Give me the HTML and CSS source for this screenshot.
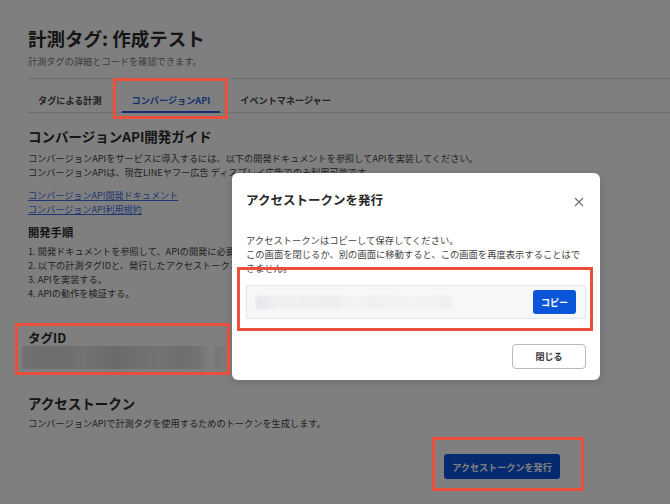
FILE: index.html
```html
<!DOCTYPE html>
<html lang="ja">
<head>
<meta charset="utf-8">
<title>計測タグ: 作成テスト</title>
<link rel="stylesheet" href="styles.css">
</head>
<body>
<div class="page">
  <h1 class="title">計測タグ: 作成テスト</h1>
  <p class="subtitle">計測タグの詳細とコードを確認できます。</p>
  <nav class="tabs">
    <span class="tab">タグによる計測</span>
    <span class="tab tab-active">コンバージョンAPI</span>
    <span class="tab">イベントマネージャー</span>
  </nav>
  <section class="guide">
    <h2 class="section-title">コンバージョンAPI開発ガイド</h2>
    <p class="text">コンバージョンAPIをサービスに導入するには、以下の開発ドキュメントを参照してAPIを実装してください。<br>コンバージョンAPIは、現在LINEヤフー広告 ディスプレイ広告でのみ利用可能です。</p>
    <div class="links">
      <a class="link" href="#">コンバージョンAPI開発ドキュメント</a>
      <a class="link" href="#">コンバージョンAPI利用規約</a>
    </div>
    <h3 class="sub-title">開発手順</h3>
    <ol class="steps">
      <li>1. 開発ドキュメントを参照して、APIの開発に必要な情報を確認する。</li>
      <li>2. 以下の計測タグIDと、発行したアクセストークンを使用する。</li>
      <li>3. APIを実装する。</li>
      <li>4. APIの動作を検証する。</li>
    </ol>
  </section>
  <section class="tagid">
    <h3 class="tagid-title">タグID</h3>
    <div class="blur-bar"></div>
  </section>
  <section class="token">
    <h2 class="section-title">アクセストークン</h2>
    <p class="text">コンバージョンAPIで計測タグを使用するためのトークンを生成します。</p>
    <div class="btn-row">
      <button class="btn-primary">アクセストークンを発行</button>
    </div>
  </section>
</div>

<div class="overlay"></div>

<div class="modal">
  <div class="modal-header">
    <h2 class="modal-title">アクセストークンを発行</h2>
    <span class="modal-close">
      <svg width="10" height="10" viewBox="0 0 10 10"><path d="M1 1L9 9M9 1L1 9" stroke="#6b6b6b" stroke-width="1.1" fill="none"/></svg>
    </span>
  </div>
  <p class="modal-text">アクセストークンはコピーして保存してください。<br>この画面を閉じるか、別の画面に移動すると、この画面を再度表示することはできません。</p>
  <div class="token-box">
    <div class="token-blur"></div>
    <button class="btn-copy">コピー</button>
  </div>
  <div class="modal-footer">
    <button class="btn-close">閉じる</button>
  </div>
</div>

<div class="mark mark-tab"></div>
<div class="mark mark-tagid"></div>
<div class="mark mark-modal"></div>
<div class="mark mark-btn"></div>
</body>
</html>
```

FILE: styles.css
```css
* { box-sizing: border-box; }
html, body {
  margin: 0;
  padding: 0;
  width: 670px;
  height: 504px;
  overflow: hidden;
  background: #ffffff;
  font-family: "Noto Sans CJK JP", "Noto Sans", sans-serif;
  color: #333333;
}
.page {
  padding: 26px 0 0 28px;
}
.title {
  margin: 0;
  font-size: 18.5px;
  line-height: 24px;
  font-weight: 700;
  color: #2a2a2a;
}
.subtitle {
  margin: 4px 0 0;
  font-size: 9.2px;
  line-height: 14px;
  color: #777777;
}
.tabs {
  margin-top: 10px;
  display: flex;
  gap: 10px;
  border-top: 1px solid #dcdcdc;
  border-bottom: 1px solid #dcdcdc;
}
.tab {
  padding: 14px 10px 4px;
  font-size: 9.15px;
  line-height: 14px;
  font-weight: 700;
  color: #444444;
  border-bottom: 2px solid transparent;
  margin-bottom: -1px;
}
.tab-active {
  color: #2b5fd9;
  border-bottom-color: #2b5fd9;
}
.guide { margin-top: 14px; }
.section-title {
  margin: 0;
  font-size: 13.5px;
  line-height: 18px;
  font-weight: 700;
  color: #2a2a2a;
}
.text {
  margin: 6px 0 0;
  font-size: 9.2px;
  line-height: 14px;
  color: #444444;
}
.links {
  margin-top: 9px;
  display: flex;
  flex-direction: column;
  align-items: flex-start;
}
.link {
  font-size: 9.1px;
  line-height: 14px;
  color: #3a70e6;
  text-decoration: underline;
}
.sub-title {
  margin: 8px 0 0;
  font-size: 11.3px;
  line-height: 16px;
  font-weight: 700;
  color: #2a2a2a;
}
.steps {
  margin: 4px 0 0;
  padding: 0;
  list-style: none;
  font-size: 9.2px;
  line-height: 14px;
  color: #444444;
}
.tagid { margin-top: 30px; }
.tagid-title {
  margin: 0;
  font-size: 12.5px;
  line-height: 16px;
  font-weight: 700;
  color: #2a2a2a;
}
.blur-bar {
  margin-left: -6px;
  width: 206px;
  height: 23px;
  background: linear-gradient(90deg,
    #e2e2e2 0, #dadada 18%, #e6e6e6 30%, #d6d6d6 45%, #e0e0e0 58%,
    #e8e8e8 66%, #dcdcdc 78%, #e6e6e6 86%, #f6f6f6 89%, #ffffff 92%,
    #ececec 95%, #fbfbfb 100%);
  filter: blur(0.6px);
}
.token { margin-top: 25px; }
.token .text { margin-top: 4px; }
.btn-row {
  margin-top: 24px;
  display: flex;
  padding-left: 416px;
}
.btn-primary {
  width: 116px;
  height: 25px;
  border: none;
  border-radius: 3px;
  background: #0c55e0;
  color: #ffffff;
  font-family: inherit;
  font-size: 9.1px;
  font-weight: 700;
  padding: 0;
}
.overlay {
  position: absolute;
  left: 0;
  top: 0;
  width: 670px;
  height: 504px;
  background: rgba(0, 0, 0, 0.5);
}
.modal {
  position: absolute;
  left: 232px;
  top: 173px;
  width: 368px;
  height: 207px;
  background: #ffffff;
  border-radius: 6px;
  padding: 18px 14px 12px;
  box-shadow: 0 2px 8px rgba(0,0,0,0.15);
}
.modal-header {
  display: flex;
  align-items: center;
  justify-content: space-between;
}
.modal-title {
  margin: 0;
  font-size: 12.5px;
  line-height: 18px;
  font-weight: 700;
  color: #2a2a2a;
}
.modal-close {
  display: flex;
  margin-right: 2px;
  margin-top: 3px;
}
.modal-text {
  margin: 24px 0 0;
  font-size: 9.3px;
  line-height: 14px;
  color: #444444;
}
.token-box {
  margin-top: 10px;
  height: 34px;
  display: flex;
  align-items: center;
  justify-content: space-between;
  padding: 0 9px;
  background: #f6f7f9;
  border: 1px solid #e2e4e8;
  border-radius: 2px;
}
.token-blur {
  width: 196px;
  height: 13px;
  background: linear-gradient(90deg,
    #e6e7ea 0, #ebecef 6%, #f0f1f3 10%, #eceef0 40%, #f3f4f6 50%,
    #eef0f2 60%, #f2f3f5 80%, #eff0f2 100%);
  filter: blur(0.8px);
}
.btn-copy {
  width: 43px;
  height: 24px;
  border: none;
  border-radius: 3px;
  background: #0a55d8;
  color: #ffffff;
  font-family: inherit;
  font-size: 9px;
  font-weight: 700;
  padding: 0;
}
.modal-footer {
  margin-top: 25px;
  display: flex;
  justify-content: flex-end;
}
.btn-close {
  width: 74px;
  height: 25px;
  border: 1px solid #b9b9b9;
  border-radius: 4px;
  background: #ffffff;
  color: #333333;
  font-family: inherit;
  font-size: 9px;
  font-weight: 700;
  padding: 0;
}
.mark {
  position: absolute;
  border: 3px solid #ea4f3c;
}
.mark-tab { left: 113px; top: 78px; width: 115px; height: 41px; }
.mark-tagid { left: 15px; top: 323px; width: 215px; height: 52px; }
.mark-modal { left: 237px; top: 267px; width: 356px; height: 64px; }
.mark-btn { left: 432px; top: 437px; width: 152px; height: 54px; }
```
